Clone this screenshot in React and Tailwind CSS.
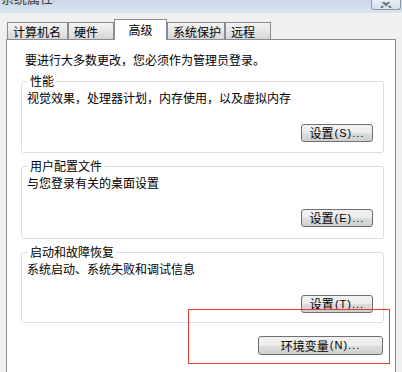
import React from 'react';

const cjk = "font-['Noto_Sans_CJK_SC','Liberation_Sans',sans-serif]";

const tabs = [
  { label: '计算机名', w: 'w-[61px]' },
  { label: '硬件', w: 'w-[46px]' },
  { label: '高级', w: 'w-[53px]', active: true },
  { label: '系统保护', w: 'w-[58px]' },
  { label: '远程', w: 'w-[46px]' },
];

const Button = ({ label, hotkey, className }) => (
  <button
    className={`flex items-center justify-center rounded-[3px] border border-[#707070] bg-[linear-gradient(#f2f2f2_0%,#ebebeb_50%,#dddddd_51%,#cfcfcf_100%)] text-[12px] leading-none text-black ${className}`}
  >
    <span className={cjk}>{label}</span>
    <span className="ml-[1px] font-['Liberation_Sans',sans-serif] text-[11px] tracking-[1px]">({hotkey})...</span>
  </button>
);

const Group = ({ title, desc, hotkey, h }) => (
  <div className={`relative mx-[14px] w-[363px] ${h} rounded-[3px] border border-[#d5dfe5] pt-[8px] pl-[5px] pr-[10px]`}>
    <span className="absolute -top-[9px] left-[6px] bg-white px-[2px] text-[12px] leading-[16px]">{title}</span>
    <p className="text-[12px] leading-[16px]">{desc}</p>
    <div className="mt-[18px] flex justify-end">
      <Button label="设置" hotkey={hotkey} className="h-[18px] w-[72px]" />
    </div>
  </div>
);

export default function App() {
  return (
    <div className={`relative h-[372px] w-[402px] overflow-hidden bg-[#f0f0f0] text-black ${cjk}`}>
      {/* Title bar */}
      <div className="flex h-[13px] items-start justify-between overflow-hidden bg-[linear-gradient(#c9d8e8,#d9e4ef)]">
        <span className="-mt-[10px] pl-[1px] text-[13px] leading-[16px] text-[#3a3a3a]">系统属性</span>
        <div className="mr-[1px] flex h-[10px] w-[30px] items-end justify-center rounded-b-[3px] border border-t-0 border-[#8d9aa8] bg-[linear-gradient(#e7edf3,#d6dfe8)]">
          <svg width="12" height="6" viewBox="0 0 12 6" className="mb-[1px]">
            <path d="M1 -2 L6 3 L11 -2 M1 6 L3 4 M11 6 L9 4" stroke="#6b7682" strokeWidth="2" fill="none" />
          </svg>
        </div>
      </div>

      {/* Tabs */}
      <div className="flex h-[27px] items-end pl-[7px]">
        {tabs.map((t) =>
          t.active ? (
            <div
              key={t.label}
              className={`relative z-10 flex h-[21px] ${t.w} justify-center border border-b-0 border-[#898c95] bg-white pt-[2px] text-[12px] leading-[16px]`}
            >
              {t.label}
            </div>
          ) : (
            <div
              key={t.label}
              className={`mb-px flex h-[17px] ${t.w} border border-b-0 border-[#898c95] bg-[linear-gradient(#f3f3f3,#e7e7e7_50%,#d6d6d6)] pl-[5px] pt-[1px] text-[12px] leading-[16px]`}
            >
              {t.label}
            </div>
          )
        )}
      </div>

      {/* Panel */}
      <div className="relative -mt-px ml-[6px] h-[340px] w-[390px] border border-[#898c95] bg-white">
        <p className="ml-[18px] mt-[12px] text-[12px] leading-[16px]">要进行大多数更改，您必须作为管理员登录。</p>
        <div className="mt-[13px]">
          <Group title="性能" desc="视觉效果，处理器计划，内存使用，以及虚拟内存" hotkey="S" h="h-[72px]" />
        </div>
        <div className="mt-[13px]">
          <Group title="用户配置文件" desc="与您登录有关的桌面设置" hotkey="E" h="h-[73px]" />
        </div>
        <div className="mt-[13px]">
          <Group title="启动和故障恢复" desc="系统启动、系统失败和调试信息" hotkey="T" h="h-[71px]" />
        </div>
        <div className="mt-[13px] flex justify-end pr-[12px]">
          <Button label="环境变量" hotkey="N" className="h-[19px] w-[125px]" />
        </div>
      </div>

      {/* red highlight annotation */}
      <div className="absolute left-[188px] top-[309px] h-[55px] w-[202px] border border-[#e53935]" />
    </div>
  );
}
